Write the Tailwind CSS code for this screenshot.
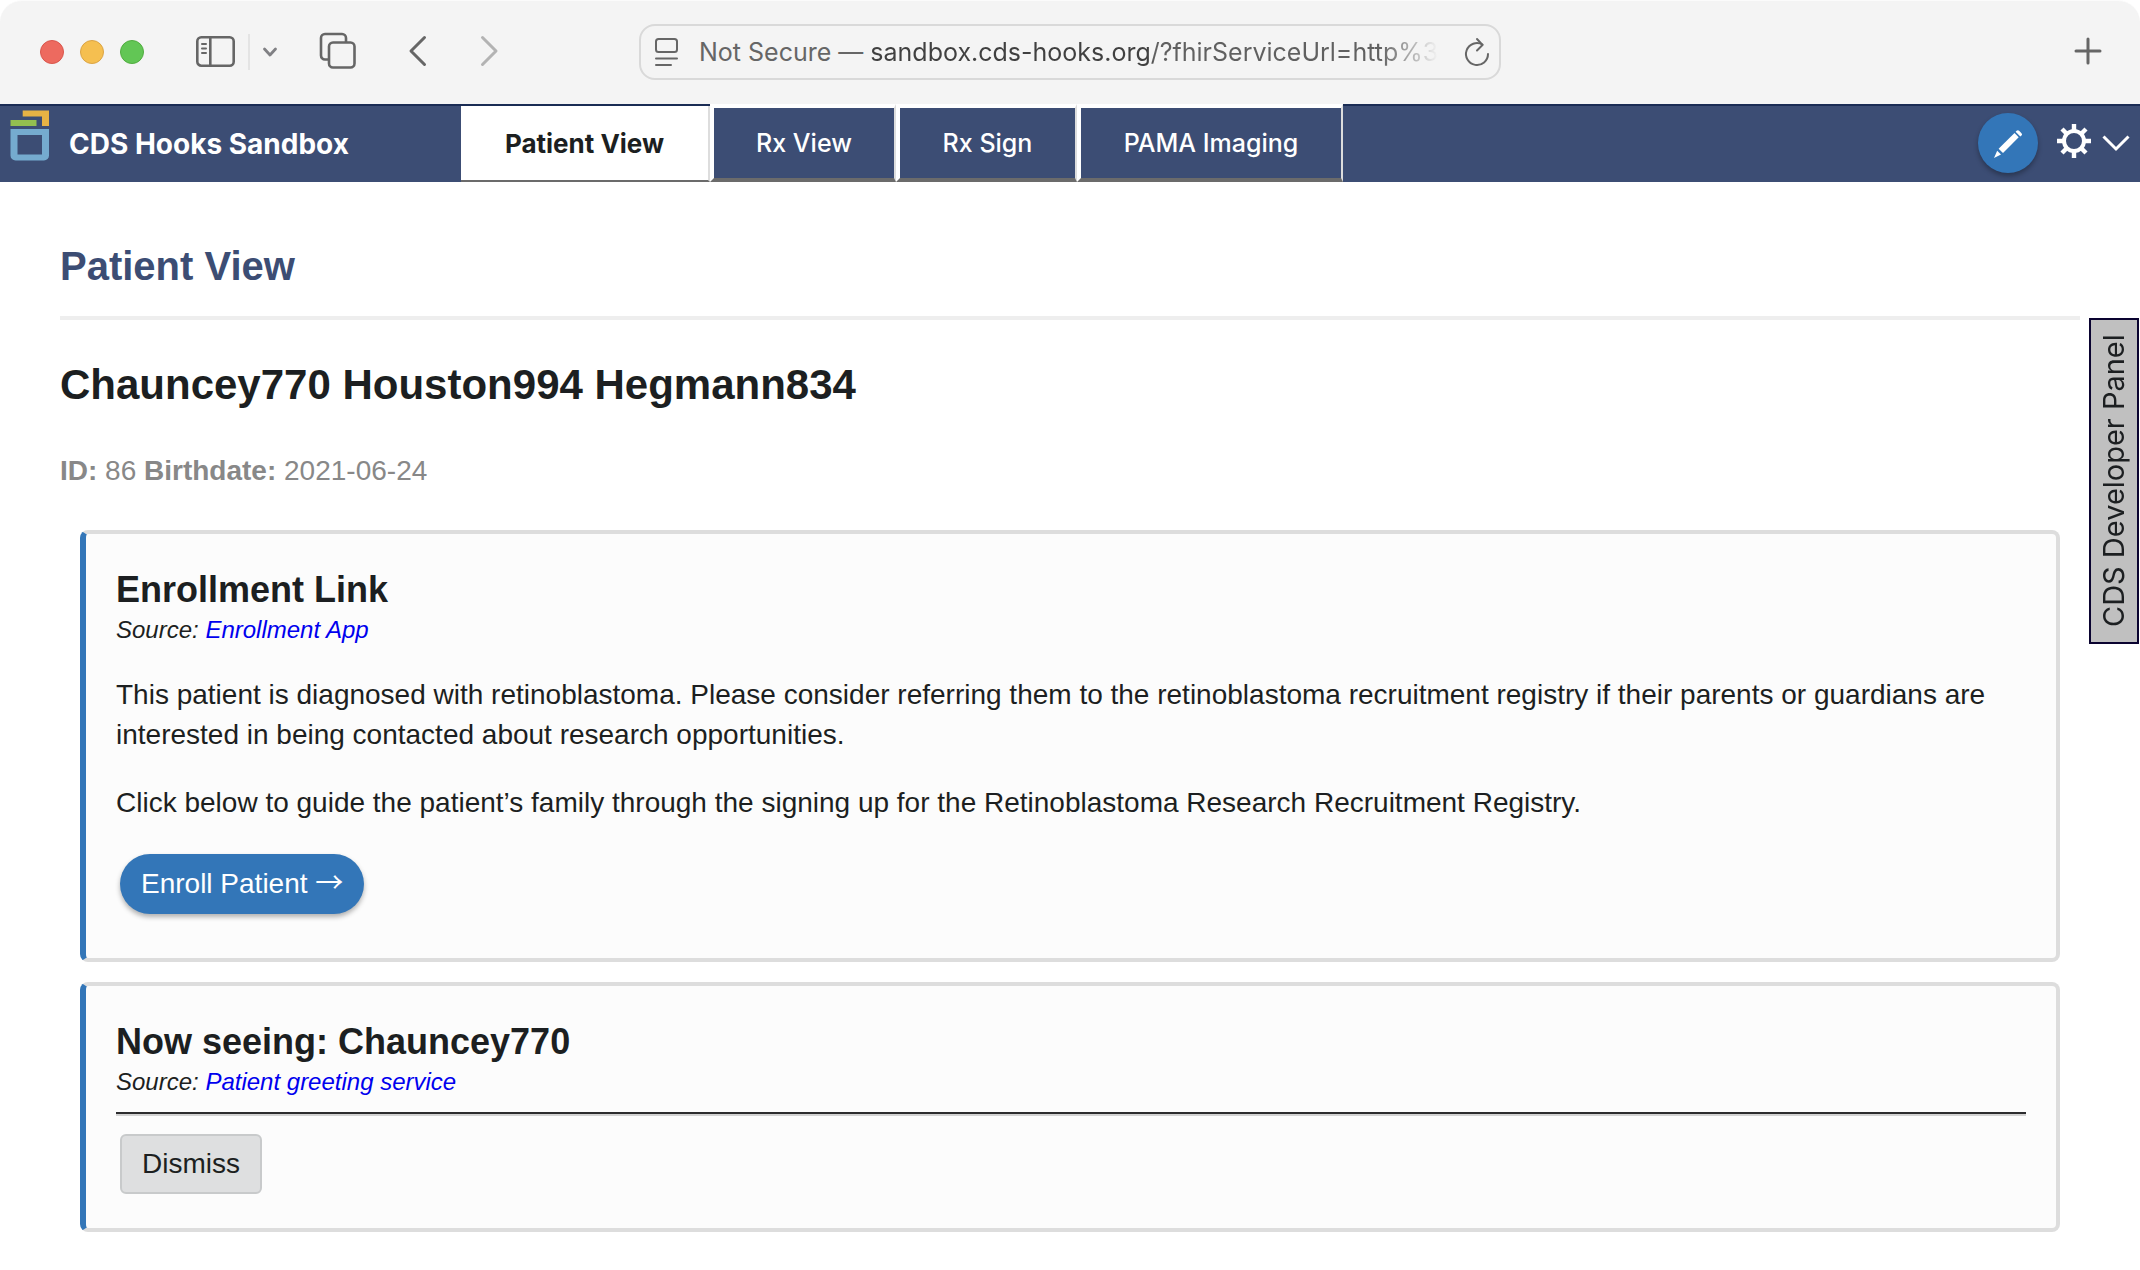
<!DOCTYPE html>
<html lang="en">
<head>
<meta charset="utf-8">
<meta name="viewport" content="width=device-width, initial-scale=1">
<title>CDS Hooks Sandbox</title>
<script src="https://cdn.jsdelivr.net/npm/@tailwindcss/browser@4"></script>
</head>
<body class="relative min-h-screen bg-white font-['Liberation_Sans',Arial,sans-serif] text-[28px] leading-10 text-[#1c1f21]">

<!-- Browser toolbar -->
<div class="grid h-[104px] grid-cols-[639px_minmax(0,1fr)_639px] items-center rounded-t-[22px] border-t border-[#fbfbfb] bg-[#f4f4f4] font-['Inter',sans-serif] text-[#666]">
  <div class="flex items-center pl-10">
    <div class="mb-px flex gap-4">
      <button aria-label="Close window" class="size-6 rounded-full border border-[#d9564c] bg-[#ed6a5f]"></button>
      <button aria-label="Minimize window" class="size-6 rounded-full border border-[#dba445] bg-[#f5bf50]"></button>
      <button aria-label="Zoom window" class="size-6 rounded-full border border-[#51ad40] bg-[#62c655]"></button>
    </div>
    <button aria-label="Show sidebar" class="mb-0.5 ml-[51px]">
      <svg class="block" width="40" height="36" viewBox="0 0 40 36" fill="none" stroke="currentColor" stroke-width="2.6" stroke-linecap="round"><rect x="2.300" y="3.300" width="36.400" height="28.400" rx="4"/><path d="M15.300 3.500v28"/><path stroke-width="2" d="M7 10h4M7 14.500h4M7 19h4"/></svg>
    </button>
    <div class="mb-0.5 ml-[13px] h-9 w-0.5 bg-[#e4e4e4]"></div>
    <button aria-label="Tab groups" class="mb-0.5 ml-3">
      <svg class="block" width="16" height="12" viewBox="0 0 16 12" fill="none" stroke="#808084" stroke-width="2.8" stroke-linecap="round" stroke-linejoin="round"><path d="M2.500 3 8 9l5.500-6"/></svg>
    </button>
    <button aria-label="Tab overview" class="mb-1 ml-[41px]">
      <svg class="block" width="38" height="38" viewBox="0 0 38 38" fill="none" stroke="currentColor" stroke-width="2.6" stroke-linejoin="round"><path d="M10 27.500H6a4 4 0 0 1-4-4V6a4 4 0 0 1 4-4h17a4 4 0 0 1 4 4v4"/><rect x="10" y="10.500" width="25.500" height="25" rx="4"/></svg>
    </button>
    <button aria-label="Back" class="mb-1 ml-[51px]">
      <svg class="block" width="20" height="32" viewBox="0 0 20 32" fill="none" stroke="currentColor" stroke-width="3" stroke-linecap="round" stroke-linejoin="round"><path d="M16.500 2.500 3 16l13.500 13.500"/></svg>
    </button>
    <button aria-label="Forward" class="mb-1 ml-[51px]">
      <svg class="block" width="20" height="32" viewBox="0 0 20 32" fill="none" stroke="#b3b3b3" stroke-width="3" stroke-linecap="round" stroke-linejoin="round"><path d="M3.500 2.500 17 16 3.500 29.500"/></svg>
    </button>
  </div>

  <div class="mb-px flex h-14 items-center rounded-2xl border-2 border-[#d9d9d9] pr-2 pl-[14px] text-[25px] leading-8">
    <svg class="block shrink-0" width="24" height="30" viewBox="0 0 24 30" fill="none" stroke="currentColor" stroke-width="2" stroke-linecap="round"><rect x="1" y="2" width="21" height="13" rx="2.500"/><path d="M1 21.500h21M1 28h15"/></svg>
    <label for="address" class="ml-5 shrink-0 whitespace-pre">Not Secure — </label>
    <input id="address" type="text" value="sandbox.cds-hooks.org/?fhirServiceUrl=http%3A" class="h-8 w-0 min-w-0 grow bg-[linear-gradient(90deg,#404040_0_280px,#606060_284px_510px,transparent_568px)] bg-clip-text text-transparent outline-none">
    <button aria-label="Reload page" class="ml-2">
      <svg class="block" width="28" height="32" viewBox="0 0 28 32" fill="none" stroke="currentColor" stroke-width="2" stroke-linecap="round" stroke-linejoin="round"><path d="M19.500 8.500A11 11 0 1 0 25 18"/><path d="M14 3l5.500 6-5.500 5.500"/></svg>
    </button>
  </div>

  <div class="flex justify-end pr-[38px]">
    <button aria-label="New tab" class="mb-1">
      <svg class="block" width="28" height="28" viewBox="0 0 28 28" fill="none" stroke="currentColor" stroke-width="3" stroke-linecap="round"><path d="M14 2v24M2 14h24"/></svg>
    </button>
  </div>
</div>

<!-- App navigation -->
<nav class="flex h-[78px] bg-[#3c4d74] font-['Inter',sans-serif] text-[25px] font-medium text-white shadow-[inset_0_2px_#1a2c54]">
  <div class="flex w-[461px] shrink-0 items-start pl-2.5">
    <svg class="mt-[6px] block shrink-0" width="39" height="52" viewBox="0 0 39 52"><path d="M12.700.500H39v15.500h-7V6.500H12.700z" fill="#e6b345"/><path d="M.500 10h26v6H.500z" fill="#93bf50"/><path fill-rule="evenodd" d="M.500 19H39v26.500a5 5 0 0 1-5 5H5.500a5 5 0 0 1-5-5zM7.500 25v19.500h24.500V25z" fill="#75abcf"/></svg>
    <span class="mt-5 ml-5 text-[28px] leading-[40px] font-bold">CDS Hooks Sandbox</span>
  </div>
  <button class="mt-0.5 w-[249px] border-r-2 border-b-2 border-r-[#ddd] border-b-[#6b6b6b] bg-white pt-0.5 text-[26px] leading-8 font-bold text-[#1c1f21]">Patient View</button>
  <button class="w-[186px] border-4 border-r-2 border-white border-r-[#ddd] border-b-[#6b6b6b] bg-[#3c4d74]">Rx View</button>
  <button class="w-[181px] border-4 border-r-2 border-white border-r-[#ddd] border-b-[#6b6b6b] bg-[#3c4d74]">Rx Sign</button>
  <button class="w-[266px] border-4 border-r-2 border-white border-r-[#ddd] border-b-[#6b6b6b] bg-[#3c4d74]">PAMA Imaging</button>
  <div class="ml-auto flex items-center pr-2.5">
    <button aria-label="Edit card" class="flex size-[60px] items-center justify-center rounded-full bg-[#3376b8] shadow-[0_3px_5px_rgba(0,0,0,0.3)]">
      <svg class="block" width="32" height="32" viewBox="0 0 32 32" fill="#fff"><path d="m22.500 6 4.200 4.200L11 26 6.600 21.700z"/><path d="m23.600 4.800 1-1a1.800 1.800 0 0 1 2.500 0l2.400 2.400a1.600 1.600 0 0 1 0 2.300L28.300 9.600z"/><path d="M5.200 23.800 9 27.600 2 31z"/></svg>
    </button>
    <button aria-label="Settings" class="ml-4 flex items-center gap-2">
      <svg class="mb-1 block" width="40" height="40" viewBox="-20 -20 40 40" fill="none" stroke="#fff"><circle r="10" stroke-width="4"/><path stroke-width="4.400" d="M0-17v6M0 17v-6M-17 0h6M17 0h-6M-12-12l4 4M12 12l-4-4M-12 12l4-4M12-12l-4 4"/></svg>
      <svg class="block" width="28" height="18" viewBox="0 0 28 18" fill="none" stroke="#fff" stroke-width="3"><path d="m1.500 2.500 12.500 12.500 12.500-12.500"/></svg>
    </button>
  </div>
</nav>

<main class="px-[60px] pt-[60px] pb-[38px]">
  <h1 class="border-b-4 border-[#eee] pb-[26px] text-[40px] leading-[48px] font-bold text-[#3c4d74]">Patient View</h1>
  <h2 class="mt-[37px] text-[42px] leading-[56px] font-bold">Chauncey770 Houston994 Hegmann834</h2>
  <p class="mt-[38px] text-[#888]"><b>ID:</b> 86 <b>Birthdate:</b> 2021-06-24</p>

  <div class="mt-[39px] flex flex-col gap-5 px-5">
    <section class="rounded-lg border-4 border-l-[6px] border-[#ddd] border-l-[#3376b8] bg-[#fcfcfc] px-[30px] pt-[34px] pb-11">
      <h3 class="text-[36px] leading-[44px] font-bold">Enrollment Link</h3>
      <p class="text-2xl leading-9 italic">Source: <a href="#" class="text-[#0000ee]">Enrollment App</a></p>
      <p class="mt-[27px]">This patient is diagnosed with retinoblastoma. Please consider referring them to the retinoblastoma recruitment registry if their parents or guardians are interested in being contacted about research opportunities.</p>
      <p class="mt-7">Click below to guide the patient’s family through the signing up for the Retinoblastoma Research Recruitment Registry.</p>
      <button class="mt-[31px] ml-1 block h-[60px] rounded-full bg-[#3376b8] px-[21px] text-white shadow-[0_3px_5px_rgba(0,0,0,0.3)]">Enroll Patient <span class="font-['Noto_Sans_CJK_SC',sans-serif] leading-none">→</span></button>
    </section>

    <section class="rounded-lg border-4 border-l-[6px] border-[#ddd] border-l-[#3376b8] bg-[#fcfcfc] px-[30px] py-[34px]">
      <h3 class="text-[36px] leading-[44px] font-bold">Now seeing: Chauncey770</h3>
      <p class="text-2xl leading-9 italic">Source: <a href="#" class="text-[#0000ee]">Patient greeting service</a></p>
      <hr class="mt-3 border-t-2 border-b-2 border-t-[#2c2c2e] border-b-[#d2d2d2]">
      <button class="mt-[18px] ml-1 block h-[60px] rounded-md border-2 border-[#c8cacb] bg-[#dedfe0] px-5">Dismiss</button>
    </section>
  </div>
</main>

<!-- Collapsed developer panel handle -->
<button class="absolute top-[318px] right-px h-[326px] w-[50px] rotate-180 border-2 border-[#0a0330] bg-[#c0c0c0] font-['Inter',sans-serif] text-[29px] leading-[46px] [writing-mode:vertical-rl]">CDS Developer Panel</button>

</body>
</html>
